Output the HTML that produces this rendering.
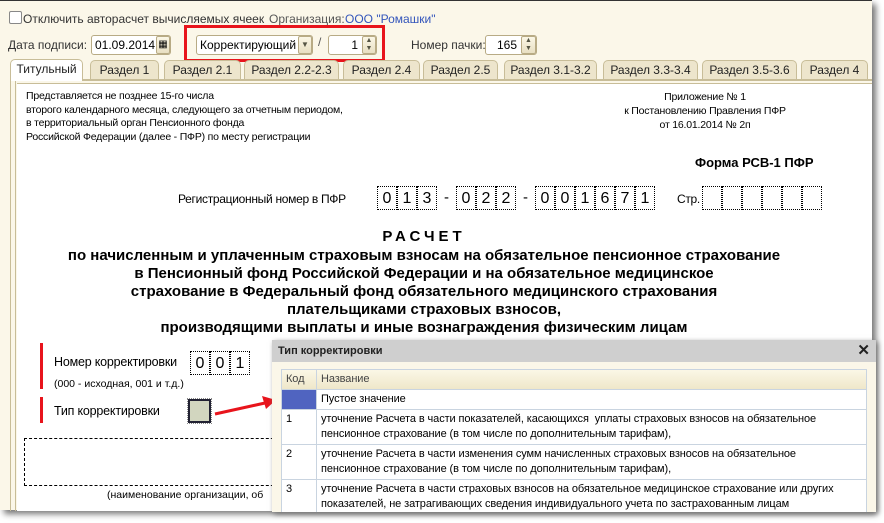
<!DOCTYPE html>
<html><head><meta charset="utf-8"><style>
*{margin:0;padding:0;box-sizing:border-box}
body{width:884px;height:523px;overflow:hidden;background:#fff;font-family:"Liberation Sans",Arial,sans-serif;font-size:12px;color:#000;position:relative}
.a{position:absolute;white-space:nowrap}
#win{position:absolute;left:0;top:0;width:872px;height:510px;background:#fbf7e9;border-top:1px solid #333;box-shadow:4px 4px 6px #777}
.t{font-size:12px}
.inp{position:absolute;background:#fff;border:1px solid #b8ab85;border-radius:3px;height:20px;font-size:12px;line-height:18px;padding:0 3px;overflow:hidden}
.btn{position:absolute;background:linear-gradient(#fbf7e6,#e8dfc2);border:1px solid #b8ab85;border-radius:2px}
.tab{position:absolute;top:59px;height:20px;background:#ede5cc;border:1px solid #c8bd98;border-bottom:none;border-radius:5px 5px 0 0;font-size:12px;line-height:19px;text-align:center;color:#222}
.cell{position:absolute;width:20px;height:24px;border:1px dotted #000;font-size:16px;line-height:23px;text-align:center}
.tl{position:absolute;left:0;width:848px;text-align:center;font-weight:bold;font-size:15px;white-space:nowrap}
table{border-collapse:collapse;font-size:11px;letter-spacing:-0.1px}
td{border:1px solid #c9d4e0;vertical-align:top;padding:2px 4px;line-height:15px}
</style></head><body>
<div id="win">
<div class="a" style="left:9px;top:10px;width:13px;height:13px;border:1px solid #888;border-radius:2px;background:#fff"></div>
<div class="a t" style="left:23px;top:11px;color:#333">Отключить авторасчет вычисляемых ячеек</div>
<div class="a t" style="left:269px;top:11px;color:#555">Организация:</div>
<div class="a t" style="left:345px;top:11px;color:#3355bb">ООО "Ромашки"</div>
<div class="a t" style="left:8px;top:37px;color:#333">Дата подписи:</div>
<div class="inp" style="left:91px;top:34px;width:80px">01.09.2014</div>
<div class="btn" style="left:156px;top:35px;width:14px;height:18px;font-size:10px;text-align:center;line-height:16px">▦</div>
<div class="inp" style="left:196px;top:34px;width:117px">Корректирующий</div>
<div class="btn" style="left:298px;top:35px;width:14px;height:18px;font-size:8px;text-align:center;line-height:16px;color:#554">▼</div>
<div class="a" style="left:318px;top:34px;color:#555">/</div>
<div class="inp" style="left:328px;top:34px;width:49px;text-align:right;padding-right:18px">1</div>
<div class="btn" style="left:362px;top:35px;width:14px;height:18px;font-size:7px;text-align:center;line-height:8px;color:#554">▲<br>▼</div>
<div class="a" style="left:184px;top:24px;width:201px;height:37px;border:3px solid #e8141c"></div>
<div class="a t" style="left:411px;top:37px;color:#333">Номер пачки:</div>
<div class="inp" style="left:485px;top:34px;width:52px;text-align:right;padding-right:19px">165</div>
<div class="btn" style="left:521px;top:35px;width:15px;height:18px;font-size:7px;text-align:center;line-height:8px;color:#554">▲<br>▼</div>
<div class="tab" style="left:10px;top:58px;height:22px;width:73px;background:#fff;z-index:2">Титульный</div>
<div class="tab" style="left:90px;width:69px">Раздел 1</div>
<div class="tab" style="left:164px;width:77px">Раздел 2.1</div>
<div class="tab" style="left:244px;width:95px">Раздел 2.2-2.3</div>
<div class="tab" style="left:343px;width:77px">Раздел 2.4</div>
<div class="tab" style="left:423px;width:75px">Раздел 2.5</div>
<div class="tab" style="left:504px;width:93px">Раздел 3.1-3.2</div>
<div class="tab" style="left:603px;width:95px">Раздел 3.3-3.4</div>
<div class="tab" style="left:702px;width:95px">Раздел 3.5-3.6</div>
<div class="tab" style="left:801px;width:67px">Раздел 4</div>
<div class="a" style="left:10px;top:78px;width:862px;height:2px;background:#c8bd98"></div>
<div class="a" style="left:10px;top:80px;width:6px;height:430px;border-left:1px solid #c8bd98;border-right:1px solid #c8bd98"></div>
<div class="a" style="left:17px;top:82px;width:855px;height:428px;background:#fff;border-top:1px solid #c8bd98"></div>
<div class="a" style="left:26px;top:89px;font-size:10.5px;line-height:13.5px;letter-spacing:-0.2px">Представляется не позднее 15-го числа<br>второго календарного месяца, следующего за отчетным периодом,<br>в территориальный орган Пенсионного фонда<br>Российской Федерации (далее - ПФР) по месту регистрации</div>
<div class="a" style="left:600px;top:89px;width:210px;text-align:center;font-size:10.5px;line-height:14px;letter-spacing:-0.2px">Приложение № 1<br>к Постановлению Правления ПФР<br>от 16.01.2014 № 2п</div>
<div class="a" style="left:695px;top:154px;font-size:13px;font-weight:bold">Форма РСВ-1 ПФР</div>
<div class="a" style="left:178px;top:191px;font-size:12px;letter-spacing:-0.3px">Регистрационный номер в ПФР</div>
<div class="cell" style="left:377px;top:185px">0</div><div class="cell" style="left:397px;top:185px">1</div><div class="cell" style="left:417px;top:185px">3</div>
<div class="a" style="left:444px;top:188px;font-size:15px">-</div>
<div class="cell" style="left:456px;top:185px">0</div><div class="cell" style="left:476px;top:185px">2</div><div class="cell" style="left:496px;top:185px">2</div>
<div class="a" style="left:523px;top:188px;font-size:15px">-</div>
<div class="cell" style="left:535px;top:185px">0</div><div class="cell" style="left:555px;top:185px">0</div><div class="cell" style="left:575px;top:185px">1</div><div class="cell" style="left:595px;top:185px">6</div><div class="cell" style="left:615px;top:185px">7</div><div class="cell" style="left:635px;top:185px">1</div>
<div class="a" style="left:677px;top:191px;font-size:12px;letter-spacing:-0.3px">Стр.</div>
<div class="cell" style="left:702px;top:185px"></div><div class="cell" style="left:722px;top:185px"></div><div class="cell" style="left:742px;top:185px"></div><div class="cell" style="left:762px;top:185px"></div><div class="cell" style="left:782px;top:185px"></div><div class="cell" style="left:802px;top:185px"></div>
<div class="tl" style="top:227px;letter-spacing:4px">РАСЧЕТ</div>
<div class="tl" style="top:246px;line-height:18px">по начисленным и уплаченным страховым взносам на обязательное пенсионное страхование<br>в Пенсионный фонд Российской Федерации и на обязательное медицинское<br>страхование в Федеральный фонд обязательного медицинского страхования<br>плательщиками страховых взносов,<br>производящими выплаты и иные вознаграждения физическим лицам</div>
<div class="a" style="left:40px;top:342px;width:3px;height:46px;background:#e8141c"></div>
<div class="a" style="left:40px;top:396px;width:3px;height:26px;background:#e8141c"></div>
<div class="a" style="left:54px;top:354px;font-size:12.5px;letter-spacing:-0.2px">Номер корректировки</div>
<div class="a" style="left:54px;top:377px;font-size:10.5px">(000 - исходная, 001 и т.д.)</div>
<div class="cell" style="left:190px;top:350px">0</div><div class="cell" style="left:210px;top:350px">0</div><div class="cell" style="left:230px;top:350px">1</div>
<div class="a" style="left:54px;top:403px;font-size:12.5px;letter-spacing:-0.2px">Тип корректировки</div>
<div class="a" style="left:188px;top:398px;width:23px;height:24px;border:2px solid #223;background:#d2d6bf;outline:1px dotted #888"></div>
<svg class="a" style="left:210px;top:390px" width="70" height="30"><path d="M5 23 L55 12" stroke="#e8141c" stroke-width="3"/><path d="M66 9 L52 5 L56 18 Z" fill="#e8141c"/></svg>
<div class="a" style="left:24px;top:437px;width:270px;height:48px;border:1px dashed #000;border-right:none"></div>
<div class="a" style="left:107px;top:488px;font-size:10.5px">(наименование организации, об</div>
</div>
<div class="a" style="left:272px;top:340px;width:604px;height:172px;background:#fbf7e9;box-shadow:2px 2px 5px #777;overflow:hidden">
<div class="a" style="left:0;top:0;width:604px;height:22px;background:#cfcfcf;font-weight:bold;font-size:11px;line-height:22px;padding-left:6px;color:#222">Тип корректировки<span style="position:absolute;right:6px;top:0;font-size:15px">✕</span></div>
<table class="a" style="left:9px;top:29px;width:586px;background:#fff">
<tr style="background:linear-gradient(#fbf7e6,#eee6c8);height:20px"><td style="width:35px;color:#444">Код</td><td style="color:#444">Название</td></tr>
<tr style="height:20px"><td style="background:#5064c0"></td><td>Пустое значение</td></tr>
<tr><td>1</td><td>уточнение Расчета в части показателей, касающихся&nbsp; уплаты страховых взносов на обязательное<br>пенсионное страхование (в том числе по дополнительным тарифам),</td></tr>
<tr><td>2</td><td>уточнение Расчета в части изменения сумм начисленных страховых взносов на обязательное<br>пенсионное страхование (в том числе по дополнительным тарифам),</td></tr>
<tr><td>3</td><td>уточнение Расчета в части страховых взносов на обязательное медицинское страхование или других<br>показателей, не затрагивающих сведения индивидуального учета по застрахованным лицам</td></tr>
<tr style="height:8px"><td></td><td></td></tr>
</table>
</div>
</body></html>
